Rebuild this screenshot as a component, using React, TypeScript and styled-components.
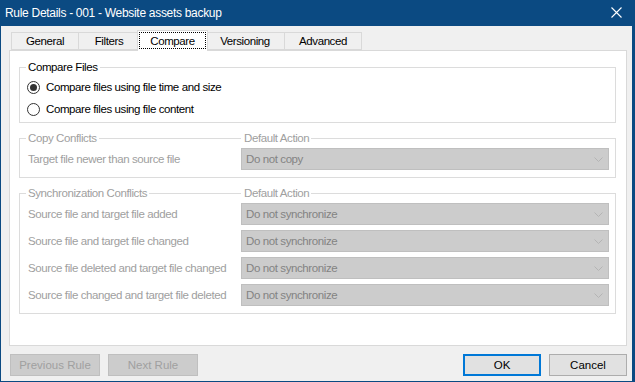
import styled, { createGlobalStyle } from "styled-components";

const GlobalStyle = createGlobalStyle`
  html, body { margin: 0; padding: 0; background: #ffffff; }
  body { font-family: "Liberation Sans", Arial, sans-serif; font-size: 11.5px; letter-spacing: -0.4px; }
`;

const tabs = ["General", "Filters", "Compare", "Versioning", "Advanced"];
const tabWidths = [67, 61, 67, 79, 77];
const syncRows = [
  "Source file and target file added",
  "Source file and target file changed",
  "Source file deleted and target file changed",
  "Source file changed and target file deleted",
];

export default function App() {
  return <>
    <GlobalStyle />
    <Window>
      <TitleBar>
        <Title>Rule Details - 001 - Website assets backup</Title>
        <Close>
          <svg width="11" height="11" viewBox="0 0 11 11">
            <path d="M0.5 0.5 L10.5 10.5 M10.5 0.5 L0.5 10.5" stroke="#ffffff" strokeWidth="1.1" />
          </svg>
        </Close>
      </TitleBar>
      <Body>
        <TabStrip>
          {tabs.map((t, i) => <Tab key={t} $w={tabWidths[i]} $active={t === "Compare"}>
            {t === "Compare" ? <Focus>{t}</Focus> : t}
          </Tab>)}
        </TabStrip>
        <Panel>
          <Group>
            <Header>
              <Corner />
              <Legend>Compare Files</Legend>
              <Line />
              <EndCorner />
            </Header>
            <RadioBox>
              <RadioRow><Radio $checked /><span>Compare files using file time and size</span></RadioRow>
              <RadioRow><Radio /><span>Compare files using file content</span></RadioRow>
            </RadioBox>
          </Group>

          <Group>
            <GridHeader>
              <HeadCell>
                <Corner />
                <Legend $disabled>Copy Conflicts</Legend>
                <Line />
              </HeadCell>
              <HeadCell>
                <Legend $disabled $first>Default Action</Legend>
                <Line />
                <EndCorner />
              </HeadCell>
            </GridHeader>
            <GridBox>
              <Label>Target file newer than source file</Label>
              <Combo>Do not copy<Chevron /></Combo>
            </GridBox>
          </Group>

          <Group>
            <GridHeader>
              <HeadCell>
                <Corner />
                <Legend $disabled>Synchronization Conflicts</Legend>
                <Line />
              </HeadCell>
              <HeadCell>
                <Legend $disabled $first>Default Action</Legend>
                <Line />
                <EndCorner />
              </HeadCell>
            </GridHeader>
            <GridBox>
              {syncRows.map(r => <Row key={r}>
                <Label>{r}</Label>
                <Combo>Do not synchronize<Chevron /></Combo>
              </Row>)}
            </GridBox>
          </Group>
        </Panel>
        <Footer>
          <Button $w={90} disabled>Previous Rule</Button>
          <Button $w={90} disabled>Next Rule</Button>
          <Spacer />
          <Button $w={78} $primary>OK</Button>
          <Button $w={78}>Cancel</Button>
        </Footer>
      </Body>
    </Window>
  </>;
}

const Chevron = () => <ChevronSvg width="9" height="5" viewBox="0 0 9 5">
  <path d="M0.5 0.5 L4.5 4.5 L8.5 0.5" stroke="#b4b4b4" strokeWidth="1" fill="none" />
</ChevronSvg>;

const Window = styled.div`
  width: 635px;
  height: 382px;
  box-sizing: border-box;
  display: flex;
  flex-direction: column;
  background: #f0f0f0;
  border: 1px solid #0b4a82;
  border-top: none;
  border-right-width: 3px;
  color: #000000;
`;

const TitleBar = styled.div`
  height: 26px;
  flex: none;
  background: #0b4a82;
  display: flex;
  align-items: center;
  padding: 0 10px 0 4px;
`;

const Title = styled.div`
  flex: 1;
  color: #ffffff;
  font-size: 12px;
  letter-spacing: -0.3px;
  padding-bottom: 1px;
`;

const Close = styled.div`
  display: flex;
  align-items: center;
  padding-bottom: 2px;
`;

const Body = styled.div`
  flex: 1;
  display: flex;
  flex-direction: column;
  padding: 4px 5px 0 8px;
`;

const TabStrip = styled.div`
  display: flex;
  align-items: flex-end;
  height: 20px;
  padding-left: 2px;
  position: relative;
  z-index: 1;
`;

const Tab = styled.div<{ $w: number; $active?: boolean }>`
  box-sizing: border-box;
  width: ${p => p.$active ? p.$w + 4 : p.$w + 1}px;
  height: ${p => p.$active ? 21 : 18}px;
  margin: ${p => p.$active ? "0 -3px -1px -2px" : "0 -1px 0 0"};
  ${p => p.$active && "z-index: 2;"}
  background: ${p => p.$active ? "#ffffff" : "#f0f0f0"};
  border: 1px solid #d9d9d9;
  border-bottom: ${p => p.$active ? "none" : "1px solid #d9d9d9"};
  display: flex;
  align-items: center;
  justify-content: center;
  padding: ${p => p.$active ? "1px 1px 2px" : "0 0 1px"};
`;

const Focus = styled.span`
  flex: 1;
  align-self: stretch;
  display: flex;
  align-items: center;
  justify-content: center;
  border: 1px dotted #000000;
`;

const Panel = styled.div`
  height: 296px;
  box-sizing: border-box;
  background: #ffffff;
  border: 1px solid #d9d9d9;
  padding: 9px 10px 0 9px;
  display: flex;
  flex-direction: column;
  gap: 8px;
`;

const Group = styled.div`
  display: flex;
  flex-direction: column;
`;

const Header = styled.div`
  display: flex;
  height: 14px;
`;

const GridHeader = styled.div`
  display: grid;
  grid-template-columns: 222px 1fr;
  height: 14px;
`;

const HeadCell = styled.div`
  display: flex;
`;

const Corner = styled.div`
  width: 6px;
  margin-top: 7px;
  border-top: 1px solid #dcdcdc;
  border-left: 1px solid #dcdcdc;
`;

const EndCorner = styled.div`
  width: 0;
  margin-top: 7px;
  border-top: 1px solid #dcdcdc;
  border-right: 1px solid #dcdcdc;
`;

const Line = styled.div`
  flex: 1;
  margin-top: 7px;
  border-top: 1px solid #dcdcdc;
`;

const Legend = styled.span<{ $disabled?: boolean; $first?: boolean }>`
  padding: 0 ${p => p.$first ? "2px 0 3px" : "2px"};
  line-height: 14px;
  color: ${p => p.$disabled ? "#a0a0a0" : "#000000"};
`;

const Boxed = styled.div`
  border: 1px solid #dcdcdc;
  border-top: none;
`;

const RadioBox = styled(Boxed)`
  padding: 2px 0 2px 7px;
`;

const RadioRow = styled.div`
  height: 22px;
  display: flex;
  align-items: center;
  gap: 6px;
`;

const Radio = styled.span<{ $checked?: boolean }>`
  width: 13px;
  height: 13px;
  box-sizing: border-box;
  border-radius: 50%;
  border: 1px solid #333333;
  background: #ffffff;
  display: flex;
  align-items: center;
  justify-content: center;
  &::after {
    content: "";
    width: 7px;
    height: 7px;
    border-radius: 50%;
    background: ${p => p.$checked ? "#333333" : "transparent"};
  }
`;

const GridBox = styled(Boxed)`
  display: grid;
  grid-template-columns: 221px 1fr;
  row-gap: 5px;
  padding: 3px 6px 7px 0;
`;

const Row = styled.div`
  display: contents;
`;

const Label = styled.div`
  color: #a0a0a0;
  padding-left: 8px;
  display: flex;
  align-items: center;
  white-space: nowrap;
`;

const Combo = styled.div`
  height: 22px;
  box-sizing: border-box;
  background: #cccccc;
  border: 1px solid #bfbfbf;
  color: #838383;
  display: flex;
  align-items: center;
  padding: 0 4px;
  justify-content: space-between;
`;

const ChevronSvg = styled.svg`
  margin-right: 1px;
`;

const Footer = styled.div`
  display: flex;
  gap: 8px;
  padding: 8px 0 0 1px;
`;

const Spacer = styled.div`
  flex: 1;
`;

const Button = styled.button<{ $w: number; $primary?: boolean }>`
  width: ${p => p.$w}px;
  height: 22px;
  box-sizing: border-box;
  font: inherit;
  padding: 0;
  background: ${p => p.disabled ? "#cccccc" : "#e1e1e1"};
  border: ${p => p.$primary ? "2px solid #0078d7" : p.disabled ? "1px solid #bfbfbf" : "1px solid #adadad"};
  color: ${p => p.disabled ? "#a0a0a0" : "#000000"};
  border-radius: 0;
`;
